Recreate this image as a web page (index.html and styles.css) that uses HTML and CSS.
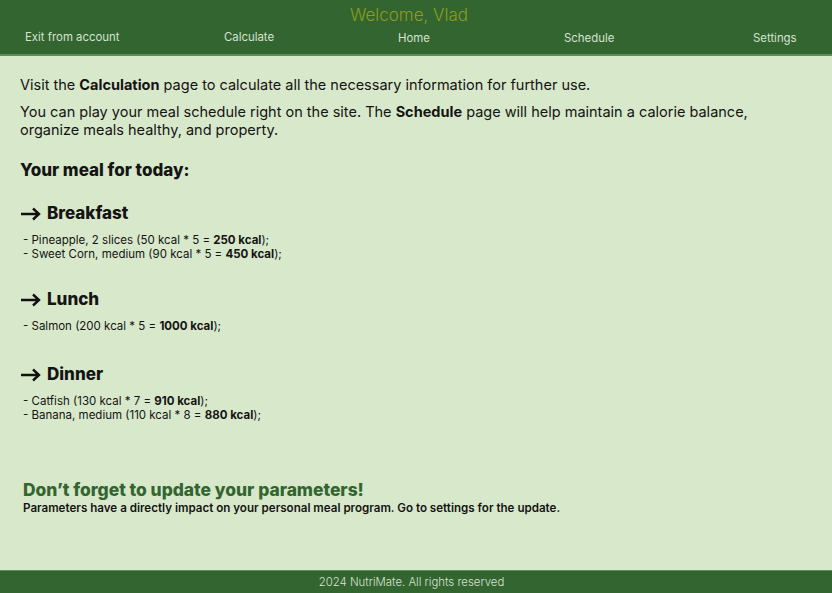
FILE: index.html
```html
<!DOCTYPE html>
<html lang="en">
<head>
<meta charset="utf-8">
<title>NutriMate</title>
<link rel="stylesheet" href="styles.css">
</head>
<body>
<header class="header">
  <div class="welcome">Welcome, Vlad</div>
  <nav class="nav">
    <a class="nav-item">Exit from account</a>
    <a class="nav-item">Calculate</a>
    <a class="nav-item">Home</a>
    <a class="nav-item">Schedule</a>
    <a class="nav-item">Settings</a>
  </nav>
</header>
<main class="main">
  <p class="intro first">Visit the <b>Calculation</b> page to calculate all the necessary information for further use.</p>
  <p class="intro">You can play your meal schedule right on the site. The <b>Schedule</b> page will help maintain a calorie balance, organize meals healthy, and property.</p>
  <h2 class="today">Your meal for today:</h2>
  <section class="meal">
    <h3 class="meal-title"><svg class="arrow" width="21" height="14" viewBox="0 0 21 14" aria-hidden="true"><path d="M1 7H19M13 1.5L19 7L13 12.5" fill="none" stroke="#111" stroke-width="2.4" stroke-linecap="butt" stroke-linejoin="miter"/></svg>Breakfast</h3>
    <ul class="items">
      <li>- Pineapple, 2 slices (50 kcal * 5 = <b>250 kcal</b>);</li>
      <li>- Sweet Corn, medium (90 kcal * 5 = <b>450 kcal</b>);</li>
    </ul>
  </section>
  <section class="meal">
    <h3 class="meal-title"><svg class="arrow" width="21" height="14" viewBox="0 0 21 14" aria-hidden="true"><path d="M1 7H19M13 1.5L19 7L13 12.5" fill="none" stroke="#111" stroke-width="2.4" stroke-linecap="butt" stroke-linejoin="miter"/></svg>Lunch</h3>
    <ul class="items">
      <li>- Salmon (200 kcal * 5 = <b>1000 kcal</b>);</li>
    </ul>
  </section>
  <section class="meal dinner">
    <h3 class="meal-title"><svg class="arrow" width="21" height="14" viewBox="0 0 21 14" aria-hidden="true"><path d="M1 7H19M13 1.5L19 7L13 12.5" fill="none" stroke="#111" stroke-width="2.4" stroke-linecap="butt" stroke-linejoin="miter"/></svg>Dinner</h3>
    <ul class="items">
      <li>- Catfish (130 kcal * 7 = <b>910 kcal</b>);</li>
      <li>- Banana, medium (110 kcal * 8 = <b>880 kcal</b>);</li>
    </ul>
  </section>
  <div class="reminder">
    <h2 class="reminder-title">Don’t forget to update your parameters!</h2>
    <p class="reminder-text">Parameters have a directly impact on your personal meal program. Go to settings for the update.</p>
  </div>
</main>
<footer class="footer">2024 NutriMate. All rights reserved</footer>
</body>
</html>
```
FILE: styles.css
```css
* { box-sizing: border-box; }
html, body { margin: 0; padding: 0; }
body {
  width: 832px;
  height: 593px;
  background: #d8e8ca;
  font-family: Inter, "Noto Sans", sans-serif;
  color: #141414;
  display: flex;
  flex-direction: column;
  overflow: hidden;
}
.header {
  height: 56px;
  background: #336530;
  border-bottom: 2px solid #5f8c58;
  display: flex;
  flex-direction: column;
  align-items: stretch;
  padding-top: 5px;
}
.welcome {
  text-align: center;
  color: #8b9d1f;
  font-size: 17px;
  font-weight: 300;
  line-height: 20px;
  padding-right: 14px;
}
.nav {
  display: grid;
  grid-template-columns: 199px 174px 166px 189px 1fr;
  padding-left: 25px;
  margin-top: 3px;
}
.nav-item {
  color: #d6e2d0;
  font-size: 11.4px;
  line-height: 18px;
  font-weight: 400;
}
.nav-item:nth-child(n+3) { padding-top: 1px; }
.main {
  flex: 1;
  padding: 20px 20px 0 20px;
}
.intro {
  margin: 0;
  max-width: 740px;
  font-size: 14.5px;
  line-height: 18px;
}
.intro + .intro { margin-top: 9px; }
.intro b { font-weight: 700; }
.today {
  margin: 20px 0 0 0;
  font-size: 17px;
  font-weight: 800;
  line-height: 22px;
}
.meal { margin-top: 21px; }
.meal + .meal { margin-top: 27px; }
.meal.dinner { margin-top: 30px; }
.meal-title {
  margin: 0;
  display: flex;
  align-items: center;
  gap: 6px;
  font-size: 17px;
  font-weight: 800;
  line-height: 22px;
}
.arrow { flex: none; margin-top: 1px; }
.items {
  list-style: none;
  margin: 9px 0 0 3px;
  padding: 0;
  font-size: 11.5px;
  line-height: 14px;
}
.items b { font-weight: 700; }
.reminder {
  margin-top: 58px;
  padding-left: 3px;
}
.reminder-title {
  margin: 0;
  color: #336530;
  font-size: 17.4px;
  font-weight: 800;
  line-height: 20px;
}
.reminder-text {
  margin: 1px 0 0 0;
  font-size: 11.6px;
  font-weight: 600;
  line-height: 14px;
}
.footer {
  height: 23px;
  background: #336530;
  border-top: 1px solid #5f8c58;
  color: #d6e2d0;
  font-size: 11.4px;
  font-weight: 300;
  line-height: 22px;
  text-align: center;
  padding-right: 9px;
}
```
